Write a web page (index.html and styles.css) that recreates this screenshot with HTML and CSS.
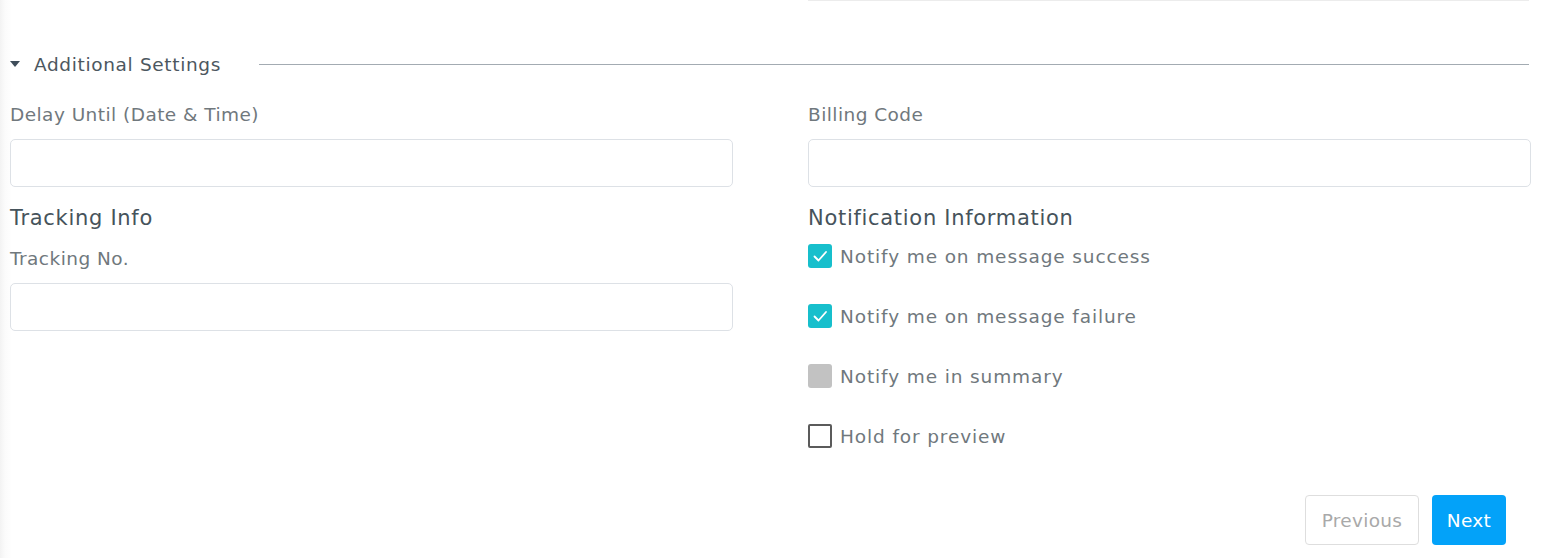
FILE: index.html
```html
<!DOCTYPE html>
<html>
<head>
<meta charset="utf-8">
<link rel="stylesheet" href="styles.css">
</head>
<body>
<div class="page">
  <div class="topline-row">
    <div></div>
    <div class="topline"></div>
  </div>
  <div class="section-header">
    <span class="caret"></span>
    <span class="section-title">Additional Settings</span>
    <span class="section-rule"></span>
  </div>
  <div class="grid">
    <div class="col">
      <label class="label">Delay Until (Date &amp; Time)</label>
      <input class="input" type="text">
      <h3 class="heading">Tracking Info</h3>
      <label class="label">Tracking No.</label>
      <input class="input" type="text">
    </div>
    <div class="col">
      <label class="label">Billing Code</label>
      <input class="input" type="text">
      <h3 class="heading">Notification Information</h3>
      <div class="checks">
        <div class="check"><span class="box checked"><svg viewBox="0 0 24 24" width="24" height="24"><path d="M6.5 12.5l4 4 7.5-8.5" fill="none" stroke="#fff" stroke-width="1.8" stroke-linecap="round" stroke-linejoin="round"/></svg></span><span class="check-text">Notify me on message success</span></div>
        <div class="check"><span class="box checked"><svg viewBox="0 0 24 24" width="24" height="24"><path d="M6.5 12.5l4 4 7.5-8.5" fill="none" stroke="#fff" stroke-width="1.8" stroke-linecap="round" stroke-linejoin="round"/></svg></span><span class="check-text">Notify me on message failure</span></div>
        <div class="check"><span class="box disabled"></span><span class="check-text">Notify me in summary</span></div>
        <div class="check"><span class="box empty"></span><span class="check-text">Hold for preview</span></div>
      </div>
      <div class="actions">
        <button class="btn btn-prev">Previous</button>
        <button class="btn btn-next">Next</button>
      </div>
    </div>
  </div>
</div>
</body>
</html>
```

FILE: styles.css
```css
html, body {
  margin: 0;
  padding: 0;
}
body {
  width: 1549px;
  height: 558px;
  overflow: hidden;
  background: linear-gradient(to right, #f3f3f3 0px, #fbfbfb 5px, #ffffff 12px);
  font-family: "DejaVu Sans", "Open Sans", sans-serif;
  color: #6b7378;
}
.page {
  padding: 0 18px 0 10px;
}
.topline-row {
  display: grid;
  grid-template-columns: 723px 721px;
  column-gap: 75px;
}
.topline {
  height: 1px;
  background: #ececec;
}
.section-header {
  display: flex;
  align-items: center;
  height: 30px;
  margin-top: 48px;
}
.caret {
  width: 0;
  height: 0;
  border-left: 5.5px solid transparent;
  border-right: 5.5px solid transparent;
  border-top: 6px solid #3f4d5a;
  margin-right: 14px;
}
.section-title {
  font-size: 18.5px;
  letter-spacing: 0.65px;
  color: #4c5760;
  margin-right: 38px;
  white-space: nowrap;
}
.section-rule {
  flex: 1;
  height: 1px;
  background: #a3abb2;
  margin-right: 2px;
}
.grid {
  display: grid;
  grid-template-columns: 723px 723px;
  column-gap: 75px;
}
.col {
  display: flex;
  flex-direction: column;
}
.label {
  display: block;
  font-size: 18.5px;
  letter-spacing: 0.45px;
  line-height: 24px;
  margin-top: 24px;
  margin-bottom: 12px;
  color: #70787d;
}
.input {
  box-sizing: border-box;
  height: 48px;
  width: 100%;
  border: 1px solid #dde1e6;
  border-radius: 5px;
  background: #fff;
  margin: 0;
  padding: 0 12px;
  font: inherit;
}
.heading {
  margin: 16px 0 0;
  font-size: 21px;
  letter-spacing: 0.7px;
  font-weight: 400;
  line-height: 30px;
  color: #46535b;
}
.col .heading + .label {
  margin-top: 14px;
}
.checks {
  display: flex;
  flex-direction: column;
  gap: 36px;
  margin-top: 11px;
}
.check {
  display: flex;
  align-items: center;
  height: 24px;
}
.box {
  box-sizing: border-box;
  width: 24px;
  height: 24px;
  border-radius: 3px;
  margin-right: 8px;
  flex: none;
  display: flex;
}
.box.checked {
  background: #17bfcc;
}
.box.disabled {
  background: #c2c2c2;
}
.box.empty {
  border: 2px solid #5b5b5b;
  border-radius: 2px;
}
.check-text {
  font-size: 18.5px;
  letter-spacing: 0.88px;
  color: #70787d;
}
.actions {
  display: flex;
  justify-content: flex-end;
  gap: 13px;
  margin-top: 47px;
  margin-right: 25px;
}
.btn {
  height: 50px;
  border-radius: 4px;
  font-family: inherit;
  font-size: 18.5px;
  letter-spacing: 0.3px;
  padding: 0;
  cursor: pointer;
}
.btn-prev {
  width: 114px;
  background: #fff;
  border: 1px solid #dedede;
  color: #a9a9a9;
}
.btn-next {
  width: 74px;
  background: #03a2f9;
  border: none;
  color: #fff;
}
```
